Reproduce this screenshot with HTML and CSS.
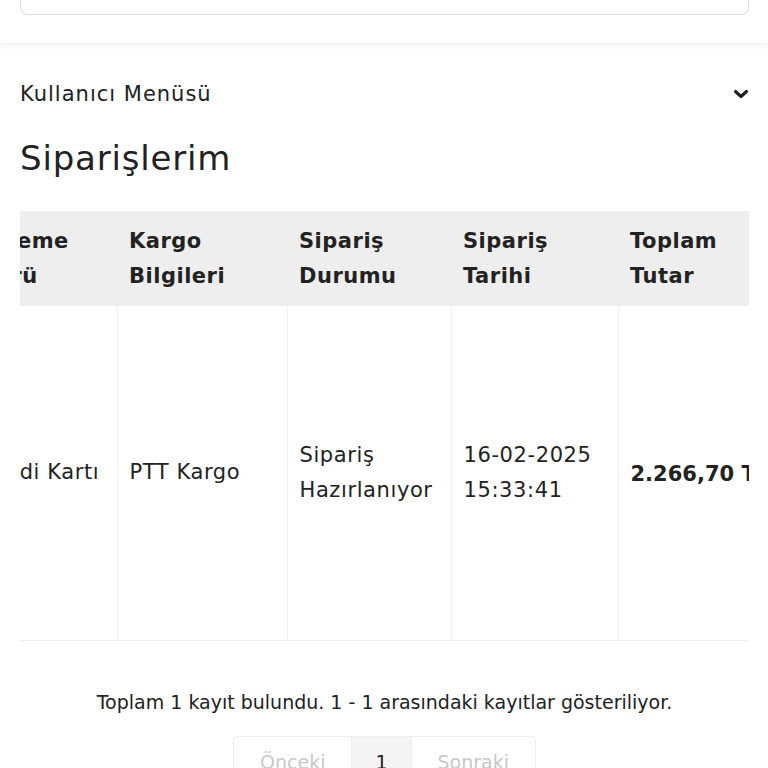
FILE: index.html
```html
<!DOCTYPE html>
<html lang="tr">
<head>
<meta charset="utf-8">
<title>Siparişlerim</title>
<link rel="stylesheet" href="styles.css">
</head>
<body>
<header class="topbar">
  <div class="search-card"></div>
</header>
<main class="content">
  <div class="menu-toggle">
    <span class="menu-title">Kullanıcı Menüsü</span>
    <svg class="chevron" width="16" height="12" viewBox="0 0 16 12" aria-hidden="true">
      <path d="M2.5 3.5 L8 8.5 L13.5 3.5" fill="none" stroke="#222" stroke-width="3.2" stroke-linecap="round" stroke-linejoin="round"/>
    </svg>
  </div>
  <h1 class="page-title">Siparişlerim</h1>
  <div class="table-wrap">
    <table class="orders">
      <colgroup>
        <col class="c-pay"><col class="c-cargo"><col class="c-status"><col class="c-date"><col class="c-total">
      </colgroup>
      <thead>
        <tr>
          <th>Ödeme<br>Türü</th>
          <th>Kargo<br>Bilgileri</th>
          <th>Sipariş<br>Durumu</th>
          <th>Sipariş<br>Tarihi</th>
          <th>Toplam<br>Tutar</th>
        </tr>
      </thead>
      <tbody>
        <tr>
          <td>Kredi Kartı</td>
          <td>PTT Kargo</td>
          <td>Sipariş Hazırlanıyor</td>
          <td>16-02-2025 15:33:41</td>
          <td class="total">2.266,70 TL</td>
        </tr>
      </tbody>
    </table>
  </div>
  <p class="summary">Toplam 1 kayıt bulundu. 1 - 1 arasındaki kayıtlar gösteriliyor.</p>
  <nav class="pager">
    <span class="pg disabled">Önceki</span>
    <span class="pg active">1</span>
    <span class="pg disabled">Sonraki</span>
  </nav>
</main>
</body>
</html>
```
FILE: styles.css
```css
* { box-sizing: border-box; }
html, body { margin: 0; padding: 0; background: #fff; }
body {
  font-family: "DejaVu Sans", "Noto Sans", sans-serif;
  color: #222;
  height: 768px;
  overflow: hidden;
}
.topbar {
  height: 43px;
  padding: 0 19px 0 20px;
  background: #fff;
  box-shadow: 0 2px 6px rgba(0,0,0,0.07);
  position: relative;
}
.search-card {
  height: 15px;
  border: 1px solid #dcdcdc;
  border-top: none;
  border-radius: 0 0 8px 8px;
}
.content {
  padding: 0 19px 0 20px;
}
.menu-toggle {
  display: flex;
  justify-content: space-between;
  align-items: center;
  height: 40px;
  margin-top: 31px;
}
.menu-title {
  font-size: 21px;
  font-weight: 400;
  letter-spacing: 1px;
}
.page-title {
  margin: 22px 0 0;
  font-size: 34px;
  font-weight: 400;
  line-height: 44px;
  letter-spacing: 0.8px;
}
.table-wrap {
  margin-top: 31px;
  overflow: hidden;
  width: 729px;
}
.orders {
  border-collapse: collapse;
  table-layout: fixed;
  margin-left: -49px;
  width: 901px;
}
.c-pay { width: 146px; }
.c-cargo { width: 170px; }
.c-status { width: 164px; }
.c-date { width: 167px; }
.c-total { width: 254px; }
.orders th {
  background: #eeeeee;
  text-align: left;
  font-size: 21px;
  font-weight: 700;
  line-height: 35px;
  height: 95px;
  padding: 12px 12px;
  vertical-align: middle;
  letter-spacing: 0.5px;
}
.orders td {
  font-size: 21px;
  line-height: 35px;
  height: 334px;
  padding: 0 12px;
  vertical-align: middle;
  border-left: 1px solid #eeeeee;
  border-bottom: 1px solid #eeeeee;
  letter-spacing: 0.6px;
}
.orders td:first-child { border-left: none; }
.orders td.total { font-weight: 700; white-space: nowrap; letter-spacing: 0; padding-top: 3px; }
.summary {
  margin: 47px 0 0;
  text-align: center;
  font-size: 19px;
  line-height: 28px;
}
.pager {
  display: flex;
  justify-content: center;
  margin-top: 20px;
}
.pg {
  display: block;
  border: 1px solid #eeeeee;
  font-size: 19px;
  line-height: 50px;
  padding: 0 26px;
}
.pg + .pg { border-left: none; }
.pg:first-child { border-radius: 5px 0 0 5px; }
.pg:last-child { border-radius: 0 5px 5px 0; }
.pg.disabled { color: #c8c8c8; }
.pg.active { background: #f4f4f4; color: #222; padding: 0 23px; }
```
